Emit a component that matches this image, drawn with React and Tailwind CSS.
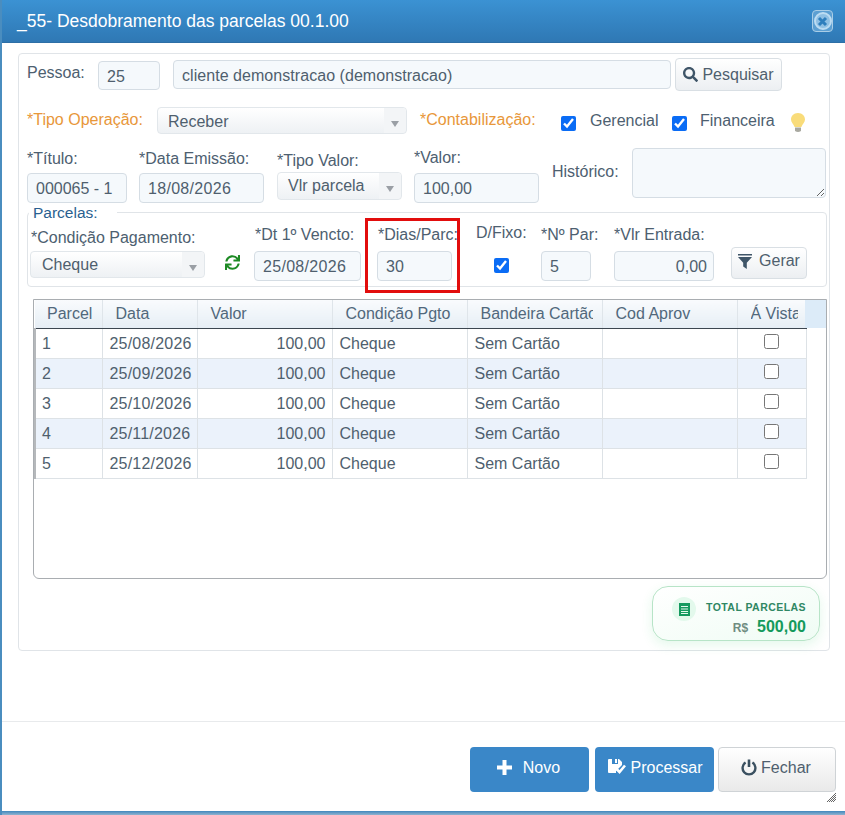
import React from 'react';
import { FaSync, FaSearch } from 'react-icons/fa';

const parcelas = [
  { n: 1, data: '25/08/2026' },
  { n: 2, data: '25/09/2026' },
  { n: 3, data: '25/10/2026' },
  { n: 4, data: '25/11/2026' },
  { n: 5, data: '25/12/2026' },
];

const Field = ({ value, className = '', right = false }) => (
  <input
    readOnly
    value={value}
    className={`block border border-[#d5dde4] rounded-[4px] bg-[#f5f9fc] text-[16px] text-[#4f5f6e] outline-none pt-[2px] ${right ? 'text-right pr-[6px]' : 'pl-[8px]'} ${className}`}
  />
);

const Select = ({ value, className = '', pad = 'pl-[10px]', textClass = '' }) => (
  <div className={`flex items-center justify-between border border-[#e2e7eb] rounded-[4px] bg-gradient-to-b from-[#ffffff] to-[#eef1f4] text-[16px] text-[#4f5f6e] ${pad} ${className}`}>
    <span className={textClass}>{value}</span>
    <span className="flex items-center justify-center self-stretch w-[22px] bg-[#f3f5f7] rounded-r-[4px]">
      <span className="mt-[6px] border-x-[4px] border-x-transparent border-t-[6px] border-t-[#9a9fa5]" />
    </span>
  </div>
);

const Check = ({ className = '', checked = true }) => (
  <input type="checkbox" readOnly checked={checked} className={`block w-[15px] h-[15px] accent-[#0a6cf5] ${className}`} />
);

const Th = ({ children, className = '' }) => (
  <th className={`h-[28px] p-0 font-normal text-left text-[16px] text-[#51687c] border-r border-[#dfe5ea] border-b border-b-[#3c4650] bg-gradient-to-b from-[#f9fbfd] to-[#e6eef5] ${className}`}>
    {children}
  </th>
);

const Td = ({ children, className = '' }) => (
  <td className={`h-[30px] p-0 pt-[2px] text-[16px] text-[#4f5f6e] border-r border-b border-[#dde2e6] ${className}`}>{children}</td>
);

export default function App() {
  return (
    <div className="relative w-[845px] h-[815px] flex flex-col bg-white border-l-2 border-[#4a8dbf] overflow-hidden text-[16px] text-[#4d6070] font-['Liberation_Sans',Arial,sans-serif]">
      {/* cabecalho */}
      <div className="h-[43px] -ml-[2px] shrink-0 flex items-center justify-between pl-[17px] pr-[12px] bg-gradient-to-b from-[#3b92d3] to-[#2f78b4] border-b border-[#2d6fa6]">
        <span className="text-[17.5px] text-white">_55- Desdobramento das parcelas 00.1.00</span>
        <button className="w-[21px] h-[22px] flex items-center justify-center rounded-[4px] border border-[#a9cde6] bg-[#5c9fd2]">
          <span className="w-[18px] h-[18px] flex items-center justify-center rounded-full border-2 border-[#bcdcf2] bg-[#8fc0e4]">
            <svg width="11" height="11" viewBox="0 0 11 11">
              <path d="M2 2 L9 9 M9 2 L2 9" stroke="#2f7fbd" strokeWidth="3" />
            </svg>
          </span>
        </button>
      </div>

      <div className="relative mt-[10px] ml-[16px] w-[812px] h-[598px] shrink-0 border border-[#e0e4e8] rounded-[4px]">
        {/* Pessoa */}
        <div className="flex items-start h-[46px] pl-[8px]">
          <label className="w-[71px] mt-[9px] leading-[20px]">Pessoa:</label>
          <Field value="25" className="w-[62px] h-[29px] mt-[7px]" />
          <Field value="cliente demonstracao (demonstracao)" className="w-[498px] h-[29px] mt-[6px] ml-[13px] tracking-[0.05px]" />
          <button className="flex items-center justify-center gap-[4px] w-[107px] h-[33px] mt-[4px] ml-[4px] border border-[#d9dfe4] rounded-[4px] bg-gradient-to-b from-[#ffffff] to-[#eceff2] text-[#4f5f6e]">
            <FaSearch className="w-[15px] h-[15px] text-[#3f5568]" />
            Pesquisar
          </button>
        </div>

        {/* Operacao */}
        <div className="flex items-start h-[40px] pl-[8px] pt-[7px]">
          <label className="w-[130px] mt-[3px] leading-[20px] text-[#e8973a]">*Tipo Operação:</label>
          <Select value="Receber" textClass="mt-[2px]" className="w-[250px] h-[27px]" />
          <label className="w-[141px] ml-[13px] mt-[3px] leading-[20px] text-[#e8973a]">*Contabilização:</label>
          <Check className="mt-[9px]" />
          <span className="ml-[14px] mt-[4px] w-[82px] leading-[20px]">Gerencial</span>
          <Check className="mt-[9px]" />
          <span className="ml-[13px] mt-[4px] w-[90px] leading-[20px]">Financeira</span>
          <svg width="16" height="22" viewBox="0 0 16 22" className="mt-[5px]">
            <path d="M8 1 C3.5 1 1 4.2 1 7.5 C1 10.5 3.6 12.2 4.6 15 L11.4 15 C12.4 12.2 15 10.5 15 7.5 C15 4.2 12.5 1 8 1 Z" fill="#f9dc7a" />
            <path d="M5 15.5 H11 V19 Q8 21 5 19 Z" fill="#a9a9a0" />
          </svg>
        </div>

        {/* Titulo */}
        <div className="flex items-start h-[72px] pl-[8px] pt-[8px]">
          <div className="w-[100px]">
            <label className="block leading-[20px] mt-[1px]">*Título:</label>
            <Field value="000065 - 1" className="w-full h-[30px] mt-[4px]" />
          </div>
          <div className="w-[125px] ml-[12px]">
            <label className="block leading-[20px] mt-[1px]">*Data Emissão:</label>
            <Field value="18/08/2026" className="w-full h-[30px] mt-[4px] tracking-[0.3px]" />
          </div>
          <div className="w-[125px] ml-[13px] pt-[2px]">
            <label className="block leading-[20px] mt-[1px]">*Tipo Valor:</label>
            <Select value="Vlr parcela" className="w-full h-[28px] mt-[1px]" />
          </div>
          <div className="w-[125px] ml-[12px]">
            <label className="block leading-[20px]">*Valor:</label>
            <Field value="100,00" className="w-full h-[30px] mt-[5px]" />
          </div>
          <label className="w-[80px] ml-[13px] mt-[14px] leading-[20px]">Histórico:</label>
          <textarea readOnly className="block w-[194px] h-[50px] border border-[#d5dde4] rounded-[4px] bg-[#f5f9fc] outline-none" />
        </div>

        {/* Parcelas */}
        <div className="relative flex items-start w-[800px] h-[75px] ml-[8px] border border-[#e0e4e8] rounded-[4px]">
          <span className="absolute left-[1px] top-[-9px] w-[88px] pl-[4px] bg-white leading-[18px] text-[15.5px] text-[#2a5f90]">Parcelas:</span>
          <div className="w-[175px] ml-[2px] mt-[15px]">
            <label className="block leading-[20px] pl-[1px]">*Condição Pagamento:</label>
            <Select value="Cheque" pad="pl-[11px]" className="w-full h-[27px] mt-[3px]" />
          </div>
          <FaSync className="w-[15px] h-[15px] ml-[20px] mt-[42px] text-[#1d8a24]" />
          <div className="w-[107px] ml-[14px] mt-[12px]">
            <label className="block leading-[20px] pl-[1px]">*Dt 1º Vencto:</label>
            <Field value="25/08/2026" className="w-full h-[30px] mt-[6px] tracking-[0.3px]" />
          </div>
          <div className="w-[75px] ml-[16px] mt-[12px]">
            <label className="block leading-[20px] pl-[1px] whitespace-nowrap">*Dias/Parc:</label>
            <Field value="30" className="w-full h-[30px] mt-[6px]" />
          </div>
          <div className="w-[65px] ml-[24px] mt-[10px]">
            <label className="block leading-[20px]">D/Fixo:</label>
            <Check className="ml-[18px] mt-[15px]" />
          </div>
          <div className="w-[50px] mt-[12px]">
            <label className="block leading-[20px] whitespace-nowrap">*Nº Par:</label>
            <Field value="5" className="w-full h-[30px] mt-[6px]" />
          </div>
          <div className="w-[100px] ml-[23px] mt-[12px]">
            <label className="block leading-[20px] whitespace-nowrap">*Vlr Entrada:</label>
            <Field value="0,00" right className="w-full h-[30px] mt-[6px]" />
          </div>
          <button className="flex items-center justify-center gap-[7px] w-[76px] h-[32px] ml-[17px] mt-[34px] pb-[4px] border border-[#d9dfe4] rounded-[4px] bg-gradient-to-b from-[#ffffff] to-[#eceff2] text-[#4f5f6e]">
            <svg width="14" height="15" viewBox="0 0 14 15">
              <path d="M0 0 H14 V1.5 H0 Z M0 3 H14 L8.8 8.8 V15 L5.2 12.5 V8.8 Z" fill="#3f5568" />
            </svg>
            Gerar
          </button>
          {/* destaque */}
          <div className="absolute left-[337px] top-[5px] w-[95px] h-[75px] border-[3px] border-[#e20d0d]" />
        </div>

        {/* grade */}
        <div className="relative w-[794px] h-[280px] ml-[14px] mt-[12px] border border-[#a9adb1] rounded-b-[6px] overflow-hidden">
          <div className="absolute left-[771px] top-0 w-[22px] h-[28px] bg-[#dcebf8]" />
          <table className="table-fixed border-collapse w-[771px]">
            <colgroup>
              <col className="w-[67px]" />
              <col className="w-[95px]" />
              <col className="w-[135px]" />
              <col className="w-[135px]" />
              <col className="w-[135px]" />
              <col className="w-[135px]" />
              <col className="w-[69px]" />
            </colgroup>
            <thead>
              <tr>
                <Th className="pl-[12px]">Parcel</Th>
                <Th className="pl-[13px]">Data</Th>
                <Th className="pl-[13px]">Valor</Th>
                <Th className="pl-[13px]">Condição Pgto</Th>
                <Th className="pl-[13px]"><div className="w-[112px] overflow-hidden whitespace-nowrap">Bandeira Cartão</div></Th>
                <Th className="pl-[13px]">Cod Aprov</Th>
                <Th className="pl-[13px]"><div className="w-[47px] overflow-hidden whitespace-nowrap">Á Vista</div></Th>
              </tr>
            </thead>
            <tbody>
              {parcelas.map((p) => (
                <tr key={p.n} className={p.n % 2 === 0 ? 'bg-[#ebf2fb]' : 'bg-white'}>
                  <Td className="pl-[6px] border-l-2 border-l-[#b5b8bb]">{p.n}</Td>
                  <Td className="pl-[7px] tracking-[0.2px]">{p.data}</Td>
                  <Td className="text-right pr-[6px]">100,00</Td>
                  <Td className="pl-[7px]">Cheque</Td>
                  <Td className="pl-[7px]">Sem Cartão</Td>
                  <Td />
                  <Td><Check checked={false} className="mx-auto -mt-[6px]" /></Td>
                </tr>
              ))}
            </tbody>
          </table>
        </div>

        {/* total */}
        <div className="flex justify-end mt-[7px] pr-[9px]">
          <div className="flex justify-between w-[168px] h-[55px] pl-[19px] pr-[13px] border border-[#b7e4c7] rounded-[16px] bg-gradient-to-br from-[#ffffff] to-[#effcf4] shadow-[0_4px_12px_rgba(34,197,94,0.12)]">
            <span className="flex items-center justify-center w-[24px] h-[24px] mt-[10px] rounded-full bg-[#e3f9ec]">
              <svg width="11" height="13" viewBox="0 0 11 13">
                <path d="M0 0 H11 V13 H0 Z M2 3 V4 H9 V3 Z M2 5.5 V6.5 H9 V5.5 Z M2 8 V9 H9 V8 Z M2 10 V11 H9 V10 Z" fill="#159a5f" fillRule="evenodd" />
              </svg>
            </span>
            <div className="flex flex-col items-end pt-[13px]">
              <span className="text-[10.5px] leading-[14px] font-bold tracking-[0.45px] text-[#2f8763]">TOTAL PARCELAS</span>
              <span className="flex items-baseline gap-[9px] mt-[3px]">
                <span className="text-[12px] font-bold text-[#6f8c80]">R$</span>
                <span className="text-[16px] leading-[20px] font-bold text-[#149a5c]">500,00</span>
              </span>
            </div>
          </div>
        </div>
      </div>

      {/* rodape */}
      <div className="mt-[70px] -ml-[2px] h-[90px] shrink-0 flex justify-end items-start pt-[25px] pr-[9px] border-t border-[#e8eaec]">
        <button className="flex items-center justify-center gap-[11px] w-[119px] h-[45px] pb-[4px] pr-[2px] rounded-[4px] bg-[#3a87c8] text-white">
          <svg width="15" height="15" viewBox="0 0 15 15">
            <path d="M5.5 0 H9.5 V5.5 H15 V9.5 H9.5 V15 H5.5 V9.5 H0 V5.5 H5.5 Z" fill="#fff" />
          </svg>
          Novo
        </button>
        <button className="flex items-center justify-center gap-[4px] w-[119px] h-[45px] ml-[6px] pb-[4px] pl-[2px] rounded-[4px] bg-[#3a87c8] text-white">
          <svg width="18" height="17" viewBox="0 0 18 17">
            <path d="M0 1 Q0 0 1 0 H4 V5 H10 V0 H11 L14 3 V6 L8 12 V14 H1 Q0 14 0 13 Z M7 0 H9 V4 H7 Z" fill="#fff" fillRule="evenodd" />
            <path d="M8.5 10 L11.5 13 L17 6.5" fill="none" stroke="#fff" strokeWidth="2.6" />
          </svg>
          Processar
        </button>
        <button className="flex items-center justify-center gap-[4px] w-[118px] h-[45px] ml-[4px] pb-[4px] pr-[2px] border border-[#cfd3d6] rounded-[4px] bg-gradient-to-b from-[#ffffff] to-[#e9e9e9] text-[#4f5f6e]">
          <svg width="16" height="17" viewBox="0 0 16 17">
            <path d="M4.6 3.6 A6.4 6.4 0 1 0 11.4 3.6" fill="none" stroke="#3a5060" strokeWidth="2.4" />
            <path d="M8 0.5 V8" fill="none" stroke="#3a5060" strokeWidth="2.6" />
          </svg>
          Fechar
        </button>
      </div>

      {/* alca de redimensionar */}
      <svg width="11" height="11" viewBox="0 0 11 11" className="absolute left-[824px] top-[792px]">
        <path d="M1 10 L10 1 M3 10 L10 3 M5 10 L10 5 M7 10 L10 7" stroke="#666" strokeWidth="1" />
      </svg>
      <div className="absolute left-[-2px] right-0 bottom-0 h-[4px] bg-gradient-to-b from-[#3f87bd] to-[#8fb3cf]" />
    </div>
  );
}
